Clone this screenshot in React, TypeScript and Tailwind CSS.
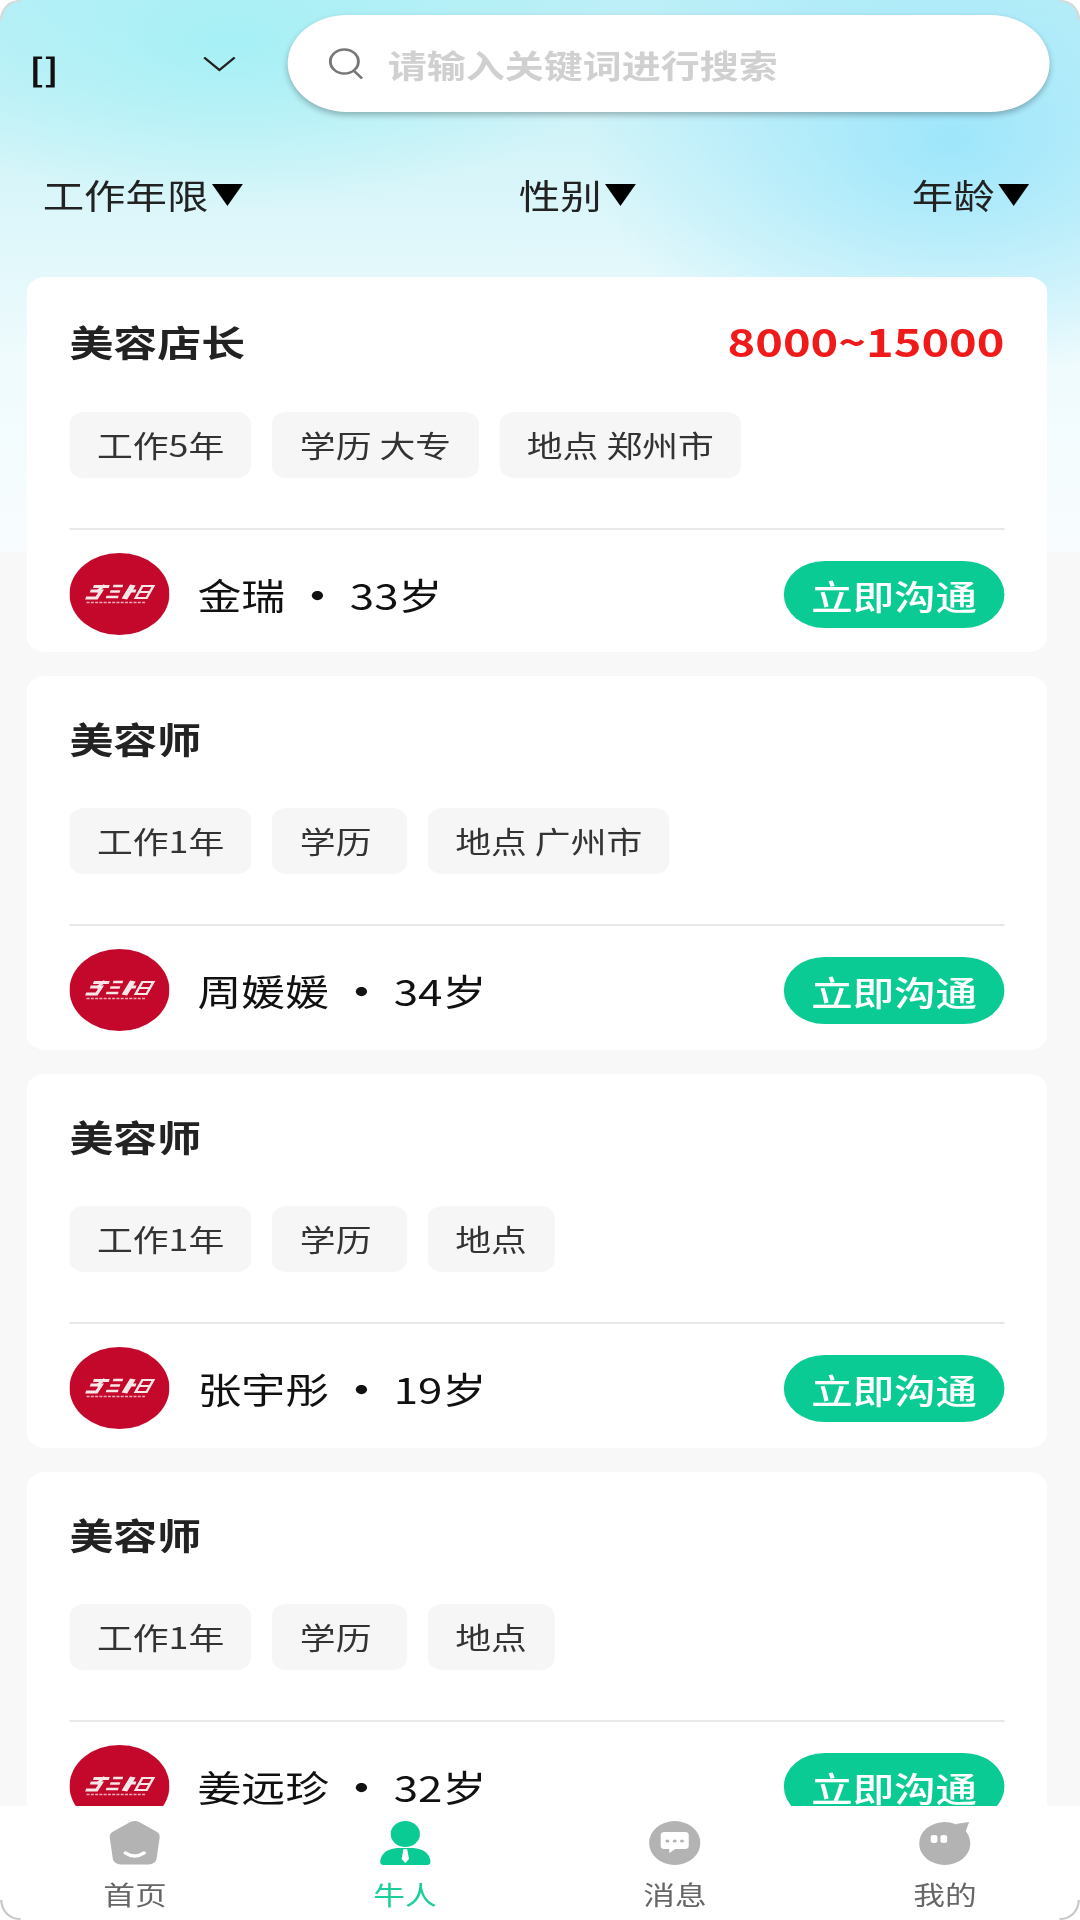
import React from "react";

type Job = { title: string; salary?: string; tags: string[]; name: string; age: string };

const jobs: Job[] = [
  { title: "美容店长", salary: "8000~15000", tags: ["工作5年", "学历 大专", "地点 郑州市"], name: "金瑞", age: "33岁" },
  { title: "美容师", tags: ["工作1年", "学历 ", "地点 广州市"], name: "周媛媛", age: "34岁" },
  { title: "美容师", tags: ["工作1年", "学历 ", "地点"], name: "张宇彤", age: "19岁" },
  { title: "美容师", tags: ["工作1年", "学历 ", "地点"], name: "姜远珍", age: "32岁" },
];

function Logo() {
  return (
    <svg viewBox="0 0 82 82" className="w-[82px] h-[82px] shrink-0">
      <ellipse cx="41" cy="41" rx="41" ry="41" fill="#c4082b" />
      <g fill="none" stroke="#f8e6e9" transform="translate(10 0) skewX(-14)">
        <path d="M18 33.5h13M16.5 38h9l-2 7h-9" strokeWidth="3" />
        <path d="M27 32l-5 7" strokeWidth="3" />
        <path d="M34 33h8M33 38.5h8M31 44h10" strokeWidth="2.6" />
        <path d="M47 38h7" strokeWidth="3" />
        <path d="M50 32l-3.5 14" strokeWidth="5" />
        <path d="M58 33h9l-2.5 12H55.5zM57.5 39h8" strokeWidth="2.2" />
      </g>
      <path d="M14 49.5h49" stroke="#e8aab6" strokeWidth="1.6" strokeDasharray="2.5 1" />
    </svg>
  );
}

function Card({ job, first }: { job: Job; first: boolean }) {
  return (
    <div className={`${first ? "h-[375px]" : "h-[374px]"} shrink-0 bg-white rounded-[15px] px-[35px] flex flex-col`}>
      <div className={`${first ? "h-[135px]" : "h-[132px]"} pb-[8px] flex items-center justify-between`}>
        <span className="text-[36px] font-bold leading-none text-[#222]">{job.title}</span>
        {job.salary && <span className="text-[38.5px] font-bold leading-none text-[#f01a1a]">{job.salary}</span>}
      </div>
      <div className="flex gap-[17px]">
        {job.tags.map((t, i) => (
          <span key={i} className="h-[66px] px-[22.5px] pb-[1px] rounded-[12px] bg-[#f6f6f6] text-[29.4px] text-[#333] flex items-center whitespace-pre">
            {t}
          </span>
        ))}
      </div>
      <div className="mt-[50px] h-[2px] bg-[#e8e8e8] shrink-0" />
      <div className="mt-[23px] flex items-center justify-between">
        <div className="flex items-center">
          <Logo />
          <span className="ml-[23px] text-[36px] leading-none text-[#111] flex items-center">
            <span>{job.name}</span>
            <span className="w-[53px] text-center font-bold">·</span>
            <span>{job.age}</span>
          </span>
        </div>
        <span className="w-[181px] h-[67px] pt-[3px] rounded-full bg-[#0bcb94] text-white font-medium text-[34px] flex items-center justify-center">
          立即沟通
        </span>
      </div>
    </div>
  );
}

function NavItem({ label, active, children }: { label: string; active?: boolean; children: React.ReactNode }) {
  return (
    <div className="flex-1 flex flex-col items-center pt-[14px]">
      {children}
      <span className={`mt-[11px] text-[26px] leading-[36px] ${active ? "text-[#19cf9c]" : "text-[#666]"}`}>{label}</span>
    </div>
  );
}

function Filter({ label }: { label: string }) {
  return (
    <span className="flex items-center">
      {label}
      <span className="ml-[2px] -mt-[6px] text-[27px] leading-none text-black">▼</span>
    </span>
  );
}

export default function App() {
  return (
    <div className="w-[1080px] h-[1920px] overflow-hidden bg-white">
      <div
        className="relative w-[886px] h-[1920px] origin-top-left scale-x-[1.219] blur-[0.5px] overflow-hidden rounded-[16px_16px_16px_16px/20px_20px_20px_20px] bg-[#f8f8f8] flex flex-col"
        style={{ fontFamily: '"Noto Sans CJK SC", "Noto Sans", sans-serif' }}
      >
        <div className="absolute left-0 top-0 w-full h-[552px] bg-[radial-gradient(ellipse_320px_170px_at_190px_40px,#a6f0f5_0%,rgba(166,240,245,0)_100%),radial-gradient(ellipse_300px_240px_at_780px_140px,#9ee6fb_0%,rgba(158,230,251,0)_100%),linear-gradient(180deg,#bceff7_0%,#d6f5f9_30%,#effbfd_65%,#f8fcfe_100%)]" />
        <div className="relative h-[1806px] overflow-hidden shrink-0">
          <div className="flex items-center h-[112px] pl-[24px] pt-[15px]">
            <span className="text-[32px] font-bold leading-none w-[142px] text-[#111] mt-[8px]">[]</span>
            <svg viewBox="0 0 28 16" className="w-[28px] h-[16px]">
              <path d="M1.5 1.5L14 14L26.5 1.5" fill="none" stroke="#222" strokeWidth="2" />
            </svg>
            <div className="ml-[42px] h-[97px] w-[625px] rounded-full bg-white shadow-[0_3px_6px_rgba(0,0,0,0.28)] flex items-center pl-[33px]">
              <svg viewBox="0 0 30 32" className="w-[30px] h-[32px]">
                <ellipse cx="13.5" cy="13.5" rx="11.5" ry="12" fill="none" stroke="#777" strokeWidth="2.4" />
                <path d="M21.5 23L28 30.5" stroke="#777" strokeWidth="2.4" />
              </svg>
              <span className="ml-[19px] text-[32px] font-bold text-[#d0d0d0]">请输入关键词进行搜索</span>
            </div>
          </div>
          <div className="flex justify-between pl-[35px] pr-[41px] h-[165px] pt-[58px] text-[34px] leading-[50px] text-[#222] items-start">
            <Filter label="工作年限" />
            <Filter label="性别" />
            <Filter label="年龄" />
          </div>
          <div className="px-[22px] w-[881px] flex flex-col gap-[24px]">
            {jobs.map((j, i) => (
              <Card key={i} job={j} first={i === 0} />
            ))}
          </div>
        </div>
        <div className="flex-1 bg-white flex">
          <NavItem label="首页">
            <svg viewBox="0 0 43 45" className="w-[43px] h-[45px]">
              <path d="M21.5 7.5L35.5 17L33 38H10L7.5 17Z" fill="#b3b3b3" stroke="#b3b3b3" strokeWidth="13" strokeLinejoin="round" />
              <path d="M14 33Q21.5 39 29 33" fill="none" stroke="#fff" strokeWidth="3.5" strokeLinecap="round" />
            </svg>
          </NavItem>
          <NavItem label="牛人" active>
            <svg viewBox="0 0 43 45" className="w-[43px] h-[45px]">
              <ellipse cx="21.5" cy="14" rx="12" ry="13" fill="#0bcb94" />
              <path d="M4 45Q0 45 1 40Q3 29 15 28H28Q40 29 42 40Q43 45 39 45Z" fill="#0bcb94" />
              <path d="M20 29H23L24.5 39L21.5 43L18.5 39Z" fill="#fff" />
            </svg>
          </NavItem>
          <NavItem label="消息">
            <svg viewBox="0 0 43 45" className="w-[43px] h-[45px]">
              <ellipse cx="21.5" cy="23" rx="21" ry="22" fill="#b3b3b3" />
              <path d="M13 12H30Q33 12 33 15V26Q33 29 30 29H22L17 33V29H13Q10 29 10 26V15Q10 12 13 12Z" fill="#fff" />
              <circle cx="15.5" cy="21" r="1.6" fill="#b3b3b3" />
              <circle cx="21.5" cy="21" r="1.6" fill="#b3b3b3" />
              <circle cx="27.5" cy="21" r="1.6" fill="#b3b3b3" />
            </svg>
          </NavItem>
          <NavItem label="我的">
            <svg viewBox="0 0 43 45" className="w-[43px] h-[45px]">
              <ellipse cx="21" cy="23.5" rx="21" ry="21.5" fill="#b3b3b3" />
              <path d="M30 4L41 2L38 12Z" fill="#b3b3b3" />
              <rect x="9.5" y="15" width="5.5" height="8" rx="2.2" fill="#fff" />
              <rect x="17.5" y="15" width="5.5" height="8" rx="2.2" fill="#fff" />
            </svg>
          </NavItem>
        </div>
        <div className="absolute left-0 top-0 w-[17px] h-[20px] rounded-tl-[16px_20px] border-l-2 border-t-2 border-[#d8d8d8]" />
        <div className="absolute right-0 top-0 w-[17px] h-[20px] rounded-tr-[16px_20px] border-r-2 border-t-2 border-[#d8d8d8]" />
        <div className="absolute left-0 bottom-0 w-[17px] h-[20px] rounded-bl-[16px_20px] border-l-2 border-b-2 border-[#c8c8c8]" />
        <div className="absolute right-0 bottom-0 w-[17px] h-[20px] rounded-br-[16px_20px] border-r-2 border-b-2 border-[#c8c8c8]" />
      </div>
    </div>
  );
}
